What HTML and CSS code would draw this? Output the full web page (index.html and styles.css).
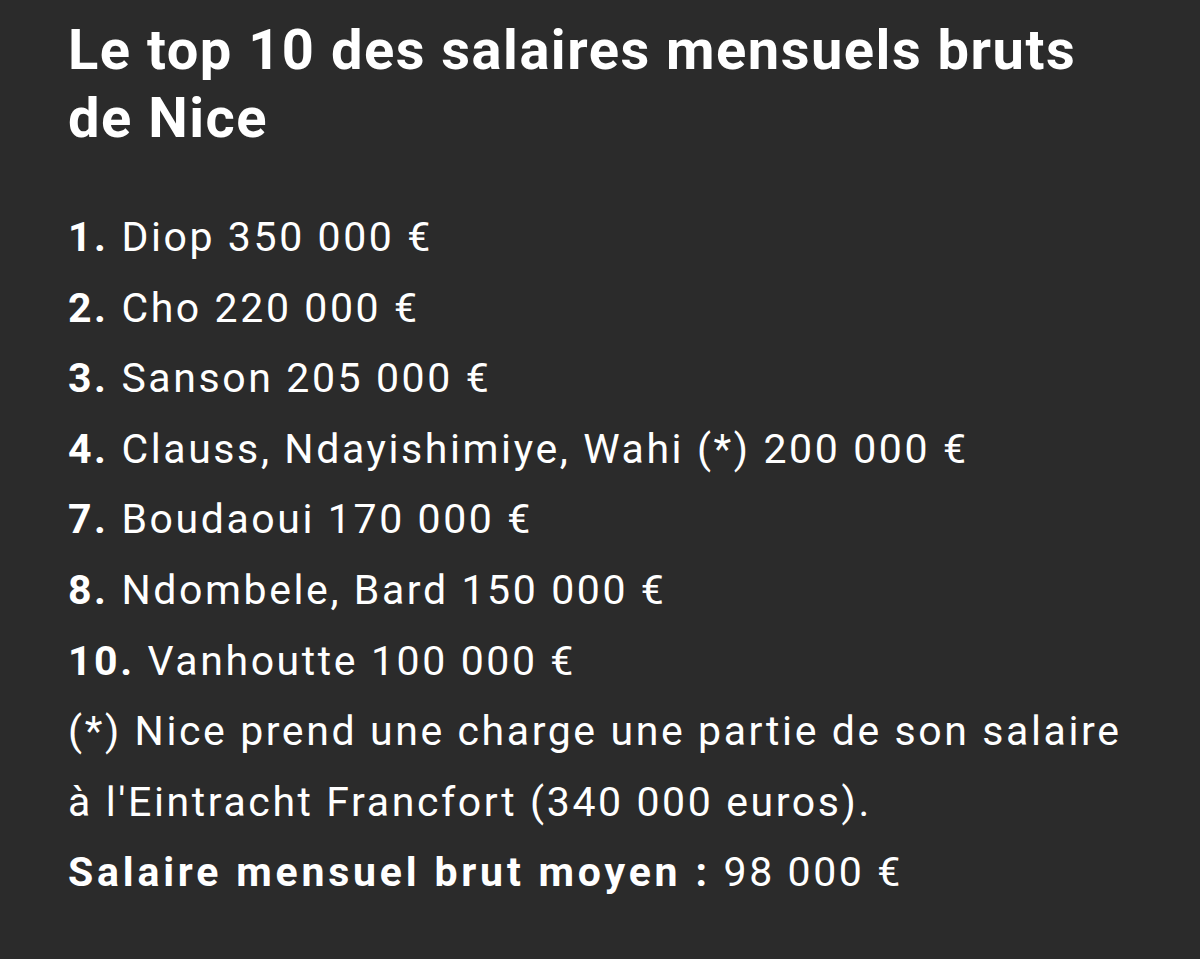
FILE: index.html
```html
<!DOCTYPE html>
<html lang="fr">
<head>
<meta charset="utf-8">
<link rel="stylesheet" href="styles.css">
</head>
<body>
<main class="card">
  <h1 class="title">Le top 10 des salaires mensuels bruts de Nice</h1>
  <div class="list">
    <p class="row"><b>1.</b> Diop 350 000 €</p>
    <p class="row"><b>2.</b> Cho 220 000 €</p>
    <p class="row"><b>3.</b> Sanson 205 000 €</p>
    <p class="row"><b>4.</b> Clauss, Ndayishimiye, Wahi (*) 200 000 €</p>
    <p class="row"><b>7.</b> Boudaoui 170 000 €</p>
    <p class="row"><b>8.</b> Ndombele, Bard 150 000 €</p>
    <p class="row"><b>10.</b> Vanhoutte 100 000 €</p>
    <p class="row">(*) Nice prend une charge une partie de son salaire à l'Eintracht Francfort (340 000 euros).</p>
    <p class="row"><b class="lead">Salaire mensuel brut moyen :</b> 98 000 €</p>
  </div>
</main>
</body>
</html>
```

FILE: styles.css
```css
html, body {
  margin: 0;
  padding: 0;
  background: #2b2b2b;
}
body {
  width: 1200px;
  height: 959px;
  overflow: hidden;
  font-family: Roboto, "Liberation Sans", sans-serif;
  color: #ffffff;
}
.card {
  padding: 16px 60px 0 68px;
}
.title {
  margin: 0;
  font-size: 56px;
  line-height: 68px;
  font-weight: 700;
  letter-spacing: 1.5px;
  max-width: 1040px;
}
.list {
  margin-top: 50px;
}
.row {
  margin: 0;
  font-size: 41px;
  line-height: 70.6px;
  font-weight: 400;
  letter-spacing: 2.6px;
}
.row b {
  font-weight: 700;
}
.row .lead {
  letter-spacing: 3.8px;
}
```
